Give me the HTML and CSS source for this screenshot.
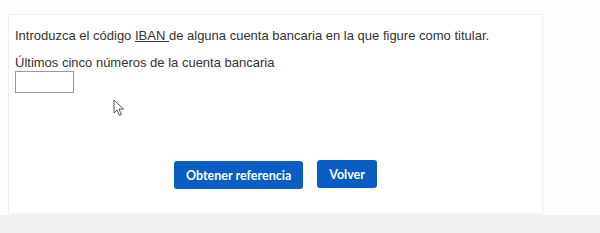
FILE: index.html
```html
<!DOCTYPE html>
<html lang="es">
<head>
    <meta charset="UTF-8">
    <title>Obtener referencia</title>
    <link rel="stylesheet" href="styles.css">
</head>
<body>

<div class="page">
    <div class="card">
        <p class="intro">Introduzca el código <span class="abbr">IBAN </span>de alguna cuenta bancaria en la que figure como titular.</p>
        <label class="field-label" for="iban">Últimos cinco números de la cuenta bancaria</label>
        <input type="text" id="iban" class="iban-input">
        <div class="actions">
            <button class="btn">Obtener referencia</button>
            <button class="btn btn-back">Volver</button>
        </div>
        <svg class="pointer" width="12" height="18" viewBox="0 0 12 18">
            <path d="M1 1 L1 14 L4 11 L6.5 16.5 L8.5 15.5 L6 10 L10.5 10 Z" fill="#fff" stroke="#555" stroke-width="1"/>
        </svg>
    </div>
</div>

</body>
</html>
```

FILE: styles.css
```css
body {
    margin: 0;
    background-color: #fdfdfd;
    font-family: "Liberation Sans", Arial, sans-serif;
    color: #333;
}
.page {
    height: 233px;
    padding: 14px 0 0 8px;
    box-sizing: border-box;
    background: linear-gradient(to bottom, #fdfdfd 0, #fdfdfd 215px, #f1f1f1 215px);
}
.card {
    position: relative;
    width: 535px;
    height: 200px;
    box-sizing: border-box;
    background-color: white;
    border: 1px solid #efefef;
    box-shadow: 0 1px 2px rgba(0, 0, 0, 0.04);
    padding: 13px 0 0 6px;
}
.intro {
    margin: 0;
    font-size: 13px;
    line-height: 16px;
}
.abbr {
    text-decoration: underline;
}
.field-label {
    display: block;
    margin-top: 11px;
    font-size: 13px;
    line-height: 16px;
}
.iban-input {
    display: block;
    width: 59px;
    height: 22px;
    box-sizing: border-box;
    margin: 0;
    border: 1px solid #999;
    border-radius: 0;
    padding: 2px 4px;
}
.actions {
    display: flex;
    gap: 14px;
    margin: 67px 0 0 159px;
    align-items: flex-start;
}
.btn {
    height: 28px;
    padding: 0 12px;
    border: none;
    border-radius: 3px;
    background-color: #0a5dc2;
    color: white;
    font-family: Lato, "Liberation Sans", sans-serif;
    font-size: 12.5px;
    font-weight: bold;
    cursor: pointer;
    margin-top: 1px;
}
.btn-back {
    margin-top: 0;
}
.pointer {
    position: absolute;
    left: 104px;
    top: 84px;
}
```
